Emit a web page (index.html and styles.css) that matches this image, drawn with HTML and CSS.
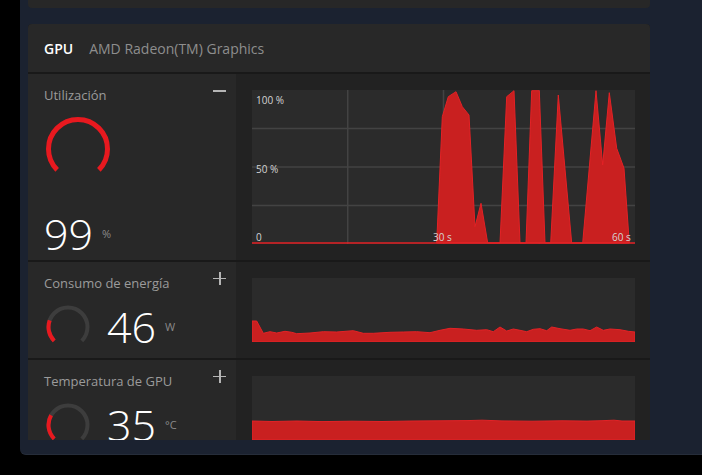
FILE: index.html
```html
<!DOCTYPE html>
<html lang="es">
<head>
  <meta charset="UTF-8">
  <meta name="viewport" content="width=device-width, initial-scale=1">
  <title>Rendimiento - GPU</title>
  <link rel="stylesheet" href="styles.css">
</head>
<body>

<div class="panel">
  <div class="scroll">
    <div class="card-prev"></div>

    <section class="gpu-card">
      <header class="card-head">
        <span class="tab">GPU</span>
        <span class="device">AMD Radeon(TM) Graphics</span>
      </header>

      <!-- Utilizacion -->
      <div class="metric metric-big">
        <div class="info info-big">
          <div class="title-row">
            <span class="title">Utilización</span>
            <span class="toggle minus"></span>
          </div>
          <svg class="gauge-big" viewBox="0 0 64 64" width="64" height="64">
            <path d="M11.14 52.86 A29.5 29.5 0 1 1 52.86 52.86" fill="none" stroke="#e8191f" stroke-width="5"/>
          </svg>
          <div class="value"><span class="num">99</span><span class="unit">%</span></div>
        </div>
        <div class="graph-cell">
          <div class="chart chart-big">
            <svg class="plot" viewBox="0 0 383 154" preserveAspectRatio="none">
              <line x1="95.75" y1="0" x2="95.75" y2="154" class="grid"/>
              <line x1="191.5" y1="0" x2="191.5" y2="154" class="grid"/>
              <line x1="287.25" y1="0" x2="287.25" y2="154" class="grid"/>
              <line x1="0" y1="38.5" x2="383" y2="38.5" class="grid"/>
              <line x1="0" y1="77" x2="383" y2="77" class="grid"/>
              <line x1="0" y1="115.5" x2="383" y2="115.5" class="grid"/>
              <polygon class="area" points="184.7,153 190.3,26.7 196.3,6.7 204,1.7 210.3,16.7 217,25 223,136.7 229,113.3 235.7,153 248,153 254.7,6.7 262,0.7 268,153 274,153 279.7,0.7 287.3,0.7 293,153 298.7,153 306.3,5 319.7,153 330.7,153 344,0.7 350.7,75 357.3,2.7 364.7,58.3 372,78.3 377.3,153"/>
              <line x1="0" y1="153" x2="383" y2="153" class="base"/>
            </svg>
            <span class="tick t100">100 %</span>
            <span class="tick t50">50 %</span>
            <span class="tick t0">0</span>
            <span class="tick t30">30 s</span>
            <span class="tick t60">60 s</span>
          </div>
        </div>
      </div>

      <!-- Consumo -->
      <div class="metric">
        <div class="info">
          <div class="title-row">
            <span class="title">Consumo de energía</span>
            <span class="toggle plus"></span>
          </div>
          <div class="reading">
            <svg class="gauge" viewBox="0 0 44 44" width="44" height="44">
              <path d="M8.21 35.79 A19.5 19.5 0 1 1 35.79 35.79" fill="none" stroke="#3d3d3d" stroke-width="4"/>
              <path d="M8.21 35.79 A19.5 19.5 0 0 1 3.68 15.33" fill="none" stroke="#e8191f" stroke-width="4"/>
            </svg>
            <div class="value"><span class="num">46</span><span class="unit">W</span></div>
          </div>
        </div>
        <div class="graph-cell">
          <div class="chart">
            <svg class="plot" viewBox="0 0 383 64" preserveAspectRatio="none">
              <polygon class="area" points="0,64 0,43 4.7,43 11.3,55.3 18,53.7 24.7,55 33,53.3 39.7,54.3 44.7,55.7 58,55 71.3,53.7 84.7,54 101.3,52.7 111.3,55.3 121.3,55.3 138,54.3 151.3,54 164.7,53.7 178,54.7 188,52.3 198,50.3 211.3,51 224.7,52.3 234.7,51.7 241.3,53.7 248,49 254.7,53 261.3,51 268,52.3 274.7,53.7 281.3,51.3 288,50.7 294.7,52.7 299.7,49 308,50.7 318,52.3 324.7,51 331.3,51 338,52.7 344.7,49 351.3,52.3 358,51 368,51.7 376.3,53.3 383,54 383,64"/>
            </svg>
          </div>
        </div>
      </div>

      <!-- Temperatura -->
      <div class="metric">
        <div class="info">
          <div class="title-row">
            <span class="title">Temperatura de GPU</span>
            <span class="toggle plus"></span>
          </div>
          <div class="reading">
            <svg class="gauge" viewBox="0 0 44 44" width="44" height="44">
              <path d="M8.21 35.79 A19.5 19.5 0 1 1 35.79 35.79" fill="none" stroke="#3d3d3d" stroke-width="4"/>
              <path d="M8.21 35.79 A19.5 19.5 0 0 1 5.11 12.25" fill="none" stroke="#e8191f" stroke-width="4"/>
            </svg>
            <div class="value"><span class="num">35</span><span class="unit">°C</span></div>
          </div>
        </div>
        <div class="graph-cell">
          <div class="chart">
            <svg class="plot" viewBox="0 0 383 64" preserveAspectRatio="none">
              <polygon class="area" points="0,64 0,45 20,45.5 45,45 70,45.6 100,45.2 130,45.5 160,45 190,44.8 215,44.6 230,44.2 250,44.9 280,45.2 310,44.8 335,45.1 350,44.7 362,44.2 370,45 383,45 383,64"/>
            </svg>
          </div>
        </div>
      </div>
    </section>
  </div>
</div>

</body>
</html>
```

FILE: styles.css
```css
html, body {
  margin: 0;
  padding: 0;
  background-color: #000;
  overflow: hidden;
}
body {
  font-family: 'Open Sans', 'Noto Sans', sans-serif;
  width: 702px;
  height: 475px;
}
.panel {
  margin-left: 20px;
  width: 682px;
  height: 455px;
  box-sizing: border-box;
  padding-left: 8px;
  background-color: #1b2230;
  border-bottom-left-radius: 6px;
  border-bottom: 1px solid #262d3a;
}
.scroll {
  width: 622px;
  height: 440px;
  overflow: hidden;
  display: flex;
  flex-direction: column;
  gap: 16px;
}
.card-prev {
  flex-shrink: 0;
  height: 8px;
  background-color: #272727;
  border-radius: 0 0 4px 4px;
}
.gpu-card {
  flex-shrink: 0;
  display: flex;
  flex-direction: column;
  gap: 2px;
  background-color: #191919;
  border-radius: 4px 4px 0 0;
  overflow: hidden;
}
.card-head {
  height: 48px;
  display: flex;
  align-items: center;
  gap: 16px;
  padding-left: 16px;
  background-color: #282828;
  font-size: 14px;
}
.tab {
  color: #fff;
  font-weight: 600;
}
.device {
  color: #8e8e8e;
}
.metric {
  display: grid;
  grid-template-columns: 208px 1fr;
  height: 96px;
}
.metric-big {
  height: 186px;
}
.info {
  background-color: #282828;
  padding: 11px 16px 0 16px;
  display: flex;
  flex-direction: column;
}
.info-big {
  padding-bottom: 4px;
}
.title-row {
  display: flex;
  justify-content: space-between;
  align-items: center;
  height: 20px;
}
.title {
  color: #9b9b9b;
  font-size: 13px;
}
.toggle {
  position: relative;
  width: 13px;
  height: 13px;
  margin-right: -6px;
}
.toggle::before,
.plus::after {
  content: '';
  position: absolute;
  left: 0;
  top: 6px;
  width: 13px;
  height: 1.5px;
  background-color: #b5b5b5;
}
.minus {
  margin-top: -9px;
}
.minus::before {
  height: 2px;
}
.plus {
  margin-top: -10px;
}
.plus::after {
  left: 6px;
  top: 0;
  width: 1.5px;
  height: 13px;
}
.gauge-big {
  display: block;
  margin: 12px 0 0 2px;
}
.info-big .value {
  margin-top: auto;
}
.value {
  display: flex;
  align-items: flex-start;
}
.num {
  color: #fff;
  font-size: 43px;
  font-weight: 350;
  line-height: 44px;
}
.unit {
  color: #8a8a8a;
  font-size: 11px;
  margin: 14px 0 0 9px;
}
.reading {
  display: flex;
  align-items: center;
  gap: 17px;
  margin-top: 12px;
  margin-left: 2px;
}
.graph-cell {
  background-color: #222;
  padding: 16px 15px 16px 16px;
}
.chart {
  position: relative;
  height: 64px;
  background-color: #2b2b2b;
}
.chart-big {
  height: 154px;
}
.plot {
  display: block;
  width: 100%;
  height: 100%;
}
.grid {
  stroke: #434343;
  stroke-width: 1.5;
}
.area {
  fill: #c92020;
  stroke: #e42226;
  stroke-width: 1;
}
.base {
  stroke: #e42226;
  stroke-width: 1.5;
}
.tick {
  position: absolute;
  color: #d4d4d4;
  font-size: 10px;
  line-height: 12px;
}
.t100 { left: 4px; top: 4px; }
.t50 { left: 4px; top: 73px; }
.t0 { left: 4px; top: 141px; }
.t30 { left: 181px; top: 141px; }
.t60 { left: 360px; top: 141px; }
```
